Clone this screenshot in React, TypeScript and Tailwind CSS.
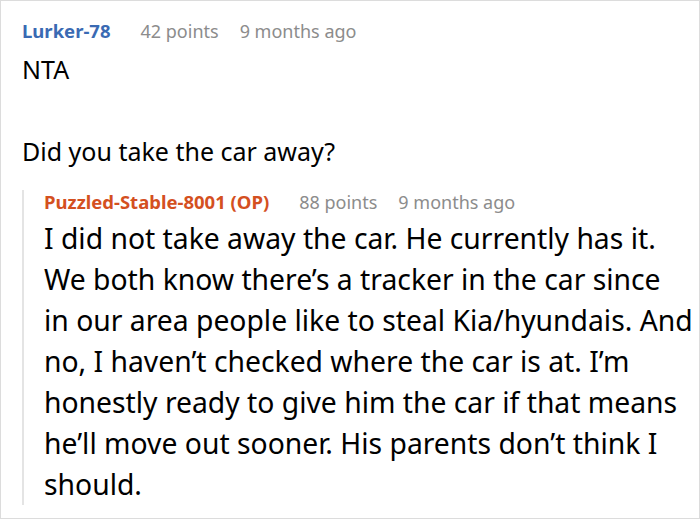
const font = { fontFamily: '"Noto Sans", "Open Sans", sans-serif' };

function Meta({ name, points, age, nameClass }: { name: string; points: string; age: string; nameClass: string }) {
  return (
    <div className="flex items-baseline text-[18px] leading-6">
      <span className={`text-[18.5px] font-bold ${nameClass}`}>{name}</span>
      <span className="ml-[30px] text-[#8c8c8c]">{points}</span>
      <span className="ml-[21px] text-[#8c8c8c]">{age}</span>
    </div>
  );
}

export default function App() {
  return (
    <div style={font} className="h-[520px] w-[700px] bg-white">
      <div className="h-[519px] border border-[#dcdcdc] pl-[21px] pr-[1px] pt-[18px]">
        <Meta name="Lurker-78" points="42 points" age="9 months ago" nameClass="text-[#3a6ab3]" />
        <div className="mt-[6px] text-[25px] leading-[40px] text-black">
          <p>NTA</p>
          <p className="mt-[42px]">Did you take the car away?</p>
        </div>
        <div className="mt-[30px] border-l-2 border-[#e4e4e4] pl-5">
          <div className="-mt-[11px]">
            <Meta name="Puzzled-Stable-8001 (OP)" points="88 points" age="9 months ago" nameClass="text-[#d4501f]" />
          </div>
          <p className="mt-[4px] text-[28.3px] leading-[41px] text-black">
            I did not take away the car. He currently has it. We both know there’s a tracker in the car since
            <br />
            in our area people like to steal Kia/hyundais. And no, I haven’t checked where the car is at. I’m honestly ready to give him the car if that means he’ll move out sooner. His parents don’t think I should.
          </p>
        </div>
      </div>
    </div>
  );
}
